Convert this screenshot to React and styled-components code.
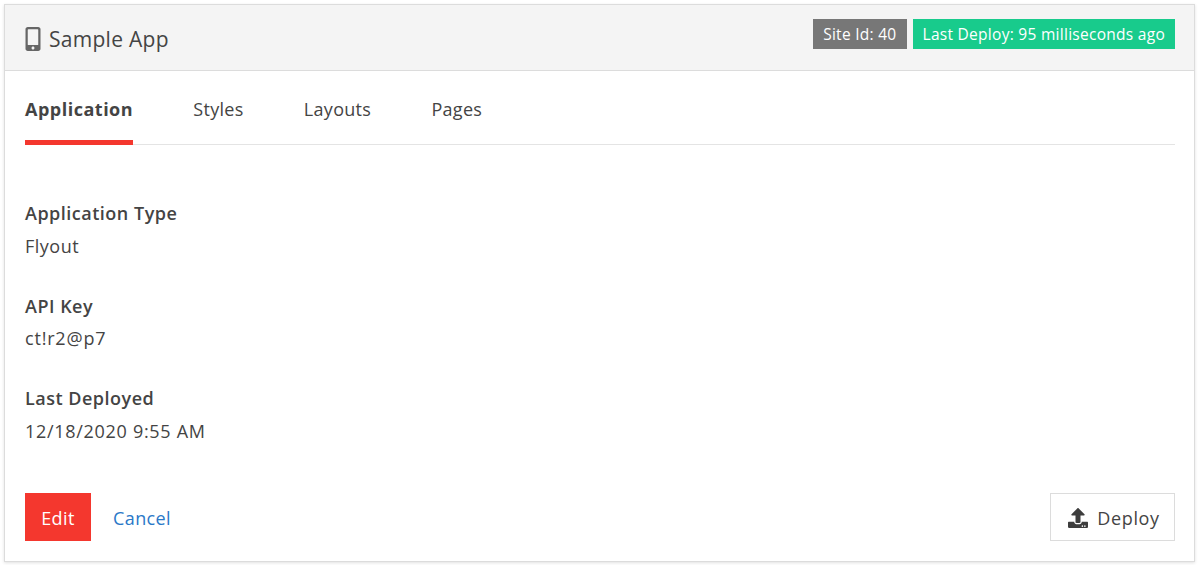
import React from "react";
import styled, { createGlobalStyle } from "styled-components";
import { FaMobileAlt, FaUpload } from "react-icons/fa";

const Global = createGlobalStyle`
  html, body { margin: 0; padding: 0; background: #fff; }
  body { font-family: "Open Sans", "Noto Sans", sans-serif; color: #444; }
`;

const Page = styled.div`
  padding: 4px;
`;

const Card = styled.section`
  border: 1px solid #dcdcdc;
  box-shadow: 0 1px 3px rgba(0, 0, 0, 0.12);
  height: 558px;
  box-sizing: border-box;
  display: flex;
  flex-direction: column;
  background: #fff;
`;

const Header = styled.header`
  height: 66px;
  box-sizing: border-box;
  flex: none;
  background: #f4f4f4;
  border-bottom: 1px solid #dcdcdc;
  display: flex;
  align-items: flex-start;
  justify-content: space-between;
  padding: 14px 19px 0 20px;
`;

const Title = styled.h1`
  margin: 0;
  display: flex;
  align-items: center;
  gap: 6px;
  height: 40px;
  font-size: 21px;
  font-weight: 400;
  letter-spacing: 0.28px;
  color: #444;
  svg { color: #666; width: 22px; height: 24px; margin-left: -3px; margin-right: -1px; }
`;

const Badges = styled.div`
  display: flex;
  gap: 6px;
`;

const Badge = styled.span`
  height: 30px;
  display: flex;
  align-items: center;
  padding: 0 10px;
  background: ${(p) => p.$bg};
  color: #fff;
  font-size: 15.5px;
  letter-spacing: 0.28px;
  white-space: nowrap;
`;

const Body = styled.div`
  flex: 1;
  display: flex;
  flex-direction: column;
  padding: 0 19px 20px 20px;
`;

const Tabs = styled.nav`
  display: flex;
  gap: 60.2px;
  height: 74px;
  flex: none;
  box-sizing: border-box;
  border-bottom: 1px solid #e4e4e4;
`;

const Tab = styled.a`
  height: 74px;
  box-sizing: border-box;
  padding-top: 24px;
  font-size: 18px;
  line-height: 28px;
  letter-spacing: ${(p) => (p.$active ? "0.5px" : "0.3px")};
  font-weight: ${(p) => (p.$active ? 700 : 400)};
  color: #444;
  border-bottom: ${(p) => (p.$active ? "5px solid #f4372e" : "none")};
`;

const Fields = styled.div`
  flex: 1;
  display: flex;
  flex-direction: column;
  gap: 32px;
  padding-top: 54px;
`;

const Field = styled.div`
  display: flex;
  flex-direction: column;
  gap: 5.5px;
`;

const Label = styled.div`
  font-size: 18px;
  line-height: 28px;
  font-weight: 600;
  letter-spacing: 0.5px;
  color: #444;
`;

const Value = styled.div`
  font-size: 18px;
  line-height: 27px;
  letter-spacing: ${(p) => p.$tracking || "0.5px"};
  color: #444;
`;

const Footer = styled.footer`
  display: flex;
  align-items: center;
  justify-content: space-between;
`;

const Actions = styled.div`
  display: flex;
  align-items: center;
  gap: 22px;
`;

const EditButton = styled.button`
  width: 66px;
  height: 48px;
  border: 0;
  background: #f4372e;
  color: #fff;
  font: 400 18px "Open Sans", sans-serif;
  letter-spacing: 0.4px;
  padding: 1px 0 0;
`;

const CancelLink = styled.a`
  display: block;
  margin-top: 2px;
  color: #2a78c8;
  font-size: 18px;
  letter-spacing: 0.4px;
`;

const DeployButton = styled.button`
  width: 125px;
  height: 48px;
  box-sizing: border-box;
  border: 1px solid #dcdcdc;
  background: #fff;
  color: #444;
  font: 400 18px "Open Sans", sans-serif;
  letter-spacing: 0.65px;
  display: flex;
  align-items: center;
  justify-content: center;
  gap: 9px;
  padding: 1px 0 0 3px;
  svg { width: 20px; height: 20px; color: #3d3d3d; }
`;

export default function App() {
  return (
    <Page>
      <Global />
      <Card>
        <Header>
          <Title>
            <FaMobileAlt />
            Sample App
          </Title>
          <Badges>
            <Badge $bg="#777">Site Id: 40</Badge>
            <Badge $bg="#18cb8c">Last Deploy: 95 milliseconds ago</Badge>
          </Badges>
        </Header>
        <Body>
          <Tabs>
            <Tab $active>Application</Tab>
            <Tab>Styles</Tab>
            <Tab>Layouts</Tab>
            <Tab>Pages</Tab>
          </Tabs>
          <Fields>
            <Field>
              <Label>Application Type</Label>
              <Value>Flyout</Value>
            </Field>
            <Field>
              <Label>API Key</Label>
              <Value $tracking="0.8px">ct!r2@p7</Value>
            </Field>
            <Field>
              <Label>Last Deployed</Label>
              <Value $tracking="0.7px">12/18/2020 9:55 AM</Value>
            </Field>
          </Fields>
          <Footer>
            <Actions>
              <EditButton>Edit</EditButton>
              <CancelLink>Cancel</CancelLink>
            </Actions>
            <DeployButton>
              <FaUpload />
              Deploy
            </DeployButton>
          </Footer>
        </Body>
      </Card>
    </Page>
  );
}
